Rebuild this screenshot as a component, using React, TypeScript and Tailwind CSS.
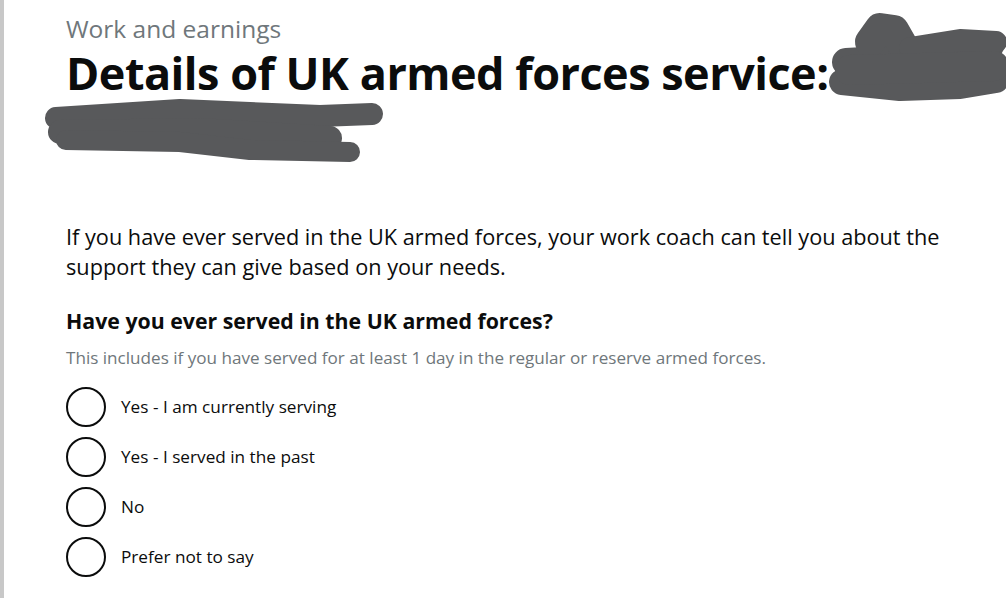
import React from "react";

const options = [
  "Yes - I am currently serving",
  "Yes - I served in the past",
  "No",
  "Prefer not to say",
];

function Redactions() {
  return (
    <svg
      className="pointer-events-none absolute left-0 top-0"
      width="1006"
      height="598"
      viewBox="0 0 1006 598"
      fill="none"
    >
      <g stroke="#58595b" strokeLinecap="round" strokeLinejoin="round">
        <path d="M56 118 L180 110 L320 116 L372 114" strokeWidth="22" />
        <path d="M60 132 L200 130 L330 138" strokeWidth="24" />
        <path d="M66 140 L180 142 L250 150 L350 152" strokeWidth="20" />
        <path d="M842 82 L900 88 L960 86 L996 80" strokeWidth="26" />
        <path d="M846 62 L920 58 L990 46" strokeWidth="28" />
        <path d="M870 42 L880 28 L894 30 L902 44" strokeWidth="30" />
        <path d="M910 48 L960 40 L996 42" strokeWidth="22" />
        <path d="M850 70 L994 66" strokeWidth="30" />
      </g>
    </svg>
  );
}

export default function App() {
  return (
    <div className="relative h-[598px] w-[1006px] overflow-hidden bg-white font-['Open_Sans',sans-serif] text-[#0b0c0c]">
      <div className="flex h-full">
        <div className="w-[4px] shrink-0 bg-[#c8c8c8]" />
        <main className="pl-[62px] pt-[16px]">
          <span className="block text-[24.5px] leading-[26px] text-[#6f777b]">
            Work and earnings
          </span>
          <h1 className="mt-[8px] h-[110px] text-[45px] font-bold leading-[46px] tracking-[-0.5px]">
            Details of UK armed forces service:
          </h1>
          <p className="mt-[62px] w-[900px] text-[21.7px] leading-[30px]">
            If you have ever served in the UK armed forces, your work coach can tell you about the
            support they can give based on your needs.
          </p>
          <fieldset className="mt-[24px]">
            <legend className="text-[21.3px] font-bold leading-[30px]">
              Have you ever served in the UK armed forces?
            </legend>
            <div className="mt-[10px] text-[17.1px] leading-[24px] text-[#6f777b]">
              This includes if you have served for at least 1 day in the regular or reserve armed forces.
            </div>
            <div className="mt-[17px] flex flex-col gap-[10px]">
              {options.map((o) => (
                <label key={o} className="flex items-center gap-[15px]">
                  <span className="h-[40px] w-[40px] rounded-full border-2 border-[#0b0c0c] bg-white" />
                  <span className="text-[17.2px] leading-[24px]">{o}</span>
                </label>
              ))}
            </div>
          </fieldset>
        </main>
      </div>
      <Redactions />
    </div>
  );
}
